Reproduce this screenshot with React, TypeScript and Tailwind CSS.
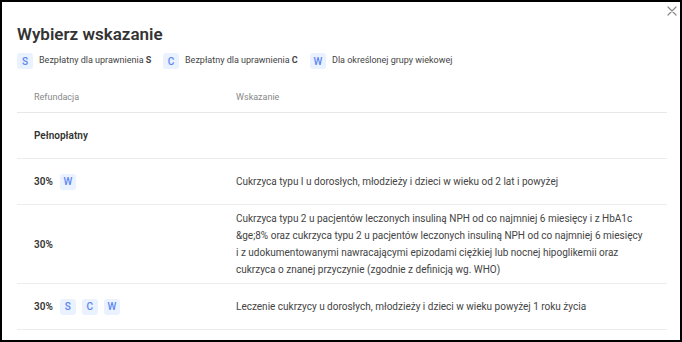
import React from "react";

type Tag = "S" | "C" | "W";

type Row = {
  refund: string;
  tags?: Tag[];
  text?: string;
  bold?: boolean;
};

const rows: Row[] = [
  { refund: "Pełnopłatny", bold: true },
  { refund: "30%", tags: ["W"], text: "Cukrzyca typu I u dorosłych, młodzieży i dzieci w wieku od 2 lat i powyżej" },
  {
    refund: "30%",
    text: "Cukrzyca typu 2 u pacjentów leczonych insuliną NPH od co najmniej 6 miesięcy i z HbA1c &ge;8% oraz cukrzyca typu 2 u pacjentów leczonych insuliną NPH od co najmniej 6 miesięcy i z udokumentowanymi nawracającymi epizodami ciężkiej lub nocnej hipoglikemii oraz cukrzyca o znanej przyczynie (zgodnie z definicją wg. WHO)",
  },
  { refund: "30%", tags: ["S", "C", "W"], text: "Leczenie cukrzycy u dorosłych, młodzieży i dzieci w wieku powyżej 1 roku życia" },
];

function Badge({ letter }: { letter: Tag }) {
  return (
    <span className="flex h-4 w-4 items-center justify-center rounded-[3px] bg-[#eaf1ff] text-[10px] font-medium text-[#5a86f0]">
      {letter}
    </span>
  );
}

export default function App() {
  return (
    <div className="relative h-[342px] w-[682px] overflow-hidden border-2 border-black bg-white font-['Roboto',sans-serif] text-[#333]">
      <button type="button" className="absolute right-[3px] top-[4px] text-[#888]">
        <svg width="10" height="10" viewBox="0 0 10 10" fill="none">
          <path d="M1 1l8 8M9 1L1 9" stroke="currentColor" strokeWidth="1.2" strokeLinecap="round" />
        </svg>
      </button>

      <div className="px-[15px] pt-[20px]">
        <h2 className="text-[17px] font-semibold leading-6 text-[#333]">Wybierz wskazanie</h2>

        <div className="mt-[7px] flex items-center text-[9px] text-[#444]">
          <div className="flex w-[146px] items-center gap-[6px]">
            <Badge letter="S" />
            <span>
              Bezpłatny dla uprawnienia <b className="font-bold">S</b>
            </span>
          </div>
          <div className="flex w-[147px] items-center gap-[6px]">
            <Badge letter="C" />
            <span>
              Bezpłatny dla uprawnienia <b className="font-bold">C</b>
            </span>
          </div>
          <div className="flex items-center gap-[6px]">
            <Badge letter="W" />
            <span>Dla określonej grupy wiekowej</span>
          </div>
        </div>

        <div className="mt-[13px] w-[650px]">
          <div className="flex h-[31px] items-center border-b border-[#e8e8e8] pt-[2px] text-[9px] text-[#888]">
            <div className="w-[202px] pl-[17px]">Refundacja</div>
            <div className="pl-[17px]">Wskazanie</div>
          </div>

          {rows.map((row, i) => (
            <div key={i} className="flex min-h-[46px] items-center border-b border-[#ececec] py-[5px] text-[10px]">
              <div className="flex w-[202px] shrink-0 items-center gap-[6px] pl-[17px]">
                <span className={row.bold ? "font-semibold" : "mr-[1px] font-semibold"}>{row.refund}</span>
                {row.tags?.map((t) => (
                  <Badge key={t} letter={t} />
                ))}
              </div>
              {row.text && <div className="flex-1 pl-[17px] pr-[22px] leading-[17px] text-[#444]">{row.text}</div>}
            </div>
          ))}
        </div>
      </div>
    </div>
  );
}
